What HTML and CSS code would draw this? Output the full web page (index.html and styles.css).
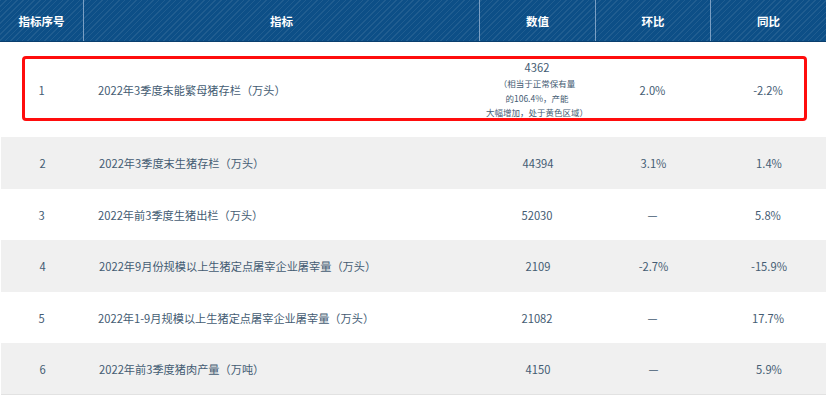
FILE: index.html
```html
<!DOCTYPE html>
<html lang="zh-CN">
<head>
<meta charset="utf-8">
<title>生猪指标</title>
<link rel="stylesheet" href="styles.css">
</head>
<body>
<div class="table">
  <div class="row head">
    <div class="cell c-no">指标序号</div>
    <div class="cell c-name">指标</div>
    <div class="cell c-val">数值</div>
    <div class="cell c-mom">环比</div>
    <div class="cell c-yoy">同比</div>
  </div>
  <div class="row r1">
    <div class="cell c-no">1</div>
    <div class="cell c-name">2022年3季度末能繁母猪存栏（万头）</div>
    <div class="cell c-val">
      <div class="val-main">4362</div>
      <div class="val-note">（相当于正常保有量<br>的106.4%，产能<br>大幅增加，处于黄色区域）</div>
    </div>
    <div class="cell c-mom">2.0%</div>
    <div class="cell c-yoy">-2.2%</div>
    <div class="mark"></div>
  </div>
  <div class="row gray h52">
    <div class="cell c-no">2</div>
    <div class="cell c-name">2022年3季度末生猪存栏（万头）</div>
    <div class="cell c-val">44394</div>
    <div class="cell c-mom">3.1%</div>
    <div class="cell c-yoy">1.4%</div>
  </div>
  <div class="row h51">
    <div class="cell c-no">3</div>
    <div class="cell c-name">2022年前3季度生猪出栏（万头）</div>
    <div class="cell c-val">52030</div>
    <div class="cell c-mom">—</div>
    <div class="cell c-yoy">5.8%</div>
  </div>
  <div class="row gray h52">
    <div class="cell c-no">4</div>
    <div class="cell c-name">2022年9月份规模以上生猪定点屠宰企业屠宰量（万头）</div>
    <div class="cell c-val">2109</div>
    <div class="cell c-mom">-2.7%</div>
    <div class="cell c-yoy">-15.9%</div>
  </div>
  <div class="row h51">
    <div class="cell c-no">5</div>
    <div class="cell c-name">2022年1-9月规模以上生猪定点屠宰企业屠宰量（万头）</div>
    <div class="cell c-val">21082</div>
    <div class="cell c-mom">—</div>
    <div class="cell c-yoy">17.7%</div>
  </div>
  <div class="row gray h51 last">
    <div class="cell c-no">6</div>
    <div class="cell c-name">2022年前3季度猪肉产量（万吨）</div>
    <div class="cell c-val">4150</div>
    <div class="cell c-mom">—</div>
    <div class="cell c-yoy">5.9%</div>
  </div>
</div>
</body>
</html>
```
FILE: styles.css
```css
html, body {
  margin: 0;
  padding: 0;
  background: #ffffff;
}
body {
  font-family: "Noto Sans CJK SC", "Noto Sans", sans-serif;
  font-size: 11.2px;
  color: #445c73;
}
.table {
  width: 826px;
  display: flex;
  flex-direction: column;
}
.row {
  display: grid;
  grid-template-columns: 83px 396px 116px 115px 116px;
  align-items: center;
  position: relative;
}
.cell {
  text-align: center;
  line-height: 16px;
}
.c-name {
  text-align: left;
  padding-left: 15px;
}
.head {
  height: 42px;
  background-color: #0d4f87;
  background-image: repeating-linear-gradient(135deg, rgba(255,255,255,0.08) 0 1px, rgba(0,0,0,0) 1px 4px);
  border-bottom: 1px solid #0a3f6e;
  box-sizing: border-box;
  align-items: stretch;
}
.head .cell {
  color: #ffffff;
  font-weight: bold;
  font-size: 11.5px;
  display: flex;
  align-items: center;
  justify-content: center;
  border-left: 1px solid #7a9fc4;
}
.head .cell:first-child {
  border-left: none;
}
.head .c-name {
  padding-left: 0;
}
.r1 {
  height: 95px;
}
.h52 { height: 52px; }
.h51 { height: 51px; }
.gray {
  background: #f0f0f0;
  margin-left: 1px;
}
.last {
  border-bottom: 1px solid #e2e2e2;
}
.val-main {
  line-height: 16px;
  margin-bottom: 1px;
}
.val-note {
  font-size: 8.5px;
  line-height: 14.5px;
}
.mark {
  position: absolute;
  left: 22px;
  top: 14px;
  width: 785px;
  height: 65px;
  border: 3px solid #ff0d0d;
  border-radius: 4px;
  box-sizing: border-box;
  pointer-events: none;
}
```
